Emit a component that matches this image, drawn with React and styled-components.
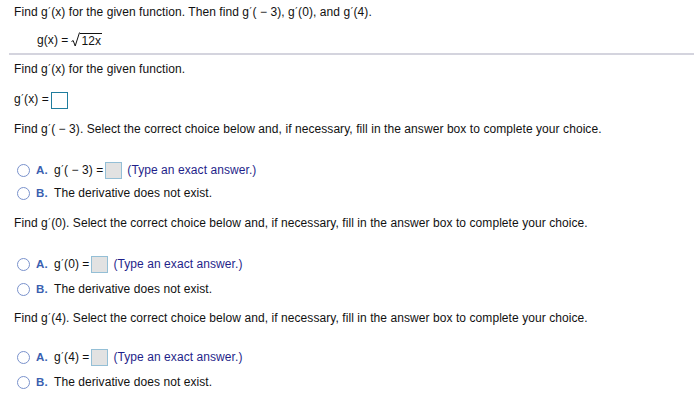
import React from "react";
import styled, { createGlobalStyle } from "styled-components";

const Global = createGlobalStyle`
  html, body { margin: 0; padding: 0; background: #fff; }
  body { font-family: "Liberation Sans", Arial, sans-serif; font-size: 12px; color: #111; letter-spacing: 0.07px; }
`;

const Page = styled.div`
  width: 694px;
  height: 406px;
  padding-top: 2px;
  box-sizing: border-box;
  overflow: hidden;
`;

const Line = styled.div`
  display: flex;
  align-items: center;
  height: 20px;
  line-height: 20px;
  padding-left: ${(p) => p.$indent ?? 14}px;
  margin-top: ${(p) => p.$mt ?? 0}px;
  white-space: nowrap;
`;

const Divider = styled.div`
  height: 2px;
  margin: 3px 0 4px 9px;
  background: #d4d4de;
`;

const Sqrt = styled.span`
  display: inline-flex;
  align-items: flex-end;
  margin-left: 3px;
`;

const Radical = styled.svg`
  width: 9px;
  height: 15px;
  display: block;
  margin-bottom: 1px;
`;

const Radicand = styled.span`
  border-top: 1px solid #111;
  line-height: 14px;
  padding: 0 1px 0 1px;
`;

const AnswerBox = styled.span`
  display: inline-block;
  width: 15px;
  height: 15px;
  margin-left: 2px;
  border: 1px solid ${(p) => (p.$active ? "#1f7d9e" : "#94bfd6")};
  background: ${(p) => (p.$active ? "#fff" : "#e2e2e2")};
  ${(p) => p.$active && "position: relative; top: 1px;"}
`;

const Radio = styled.span`
  display: inline-block;
  width: 11px;
  height: 11px;
  border-radius: 50%;
  border: 1px solid #7a92cc;
  background: #fff;
  margin-left: 3px;
  margin-right: 6px;
  box-sizing: content-box;
`;

const ChoiceLabel = styled.span`
  display: inline-block;
  width: 18px;
  color: #3a5fb0;
  font-weight: bold;
  font-size: 11.5px;
`;

const Hint = styled.span`
  margin-left: 5px;
  color: #1f1f8a;
`;

const M = styled.span`
  white-space: pre;
`;

const PrimeMark = styled.span`
  font-family: "DejaVu Sans", sans-serif;
  font-size: 10px;
  margin: 0 0.5px 0 0.5px;
  position: relative;
  top: -1px;
`;

const G = () => (
  <>
    g<PrimeMark>′</PrimeMark>
  </>
);

const RadicalIcon = () => (
  <Radical viewBox="0 0 9 15">
    <path d="M0.5 9.5 L2.2 8.6 L4.2 14 L8.5 0.5" fill="none" stroke="#111" strokeWidth="1" />
  </Radical>
);

function Choice({ mt, letter, children }) {
  return (
    <Line $mt={mt} $indent={14}>
      <Radio />
      <ChoiceLabel>{letter}.</ChoiceLabel>
      {children}
    </Line>
  );
}

function ValueQuestion({ arg, promptMt, aMt, bMt }) {
  return (
    <>
      <Line $mt={promptMt}>
        <M>
          Find <G />
          {`(${arg}). Select the correct choice below and, if necessary, fill in the answer box to complete your choice.`}
        </M>
      </Line>
      <Choice mt={aMt} letter="A">
        <M>
          <G />
          {`(${arg}) =`}
        </M>
        <AnswerBox />
        <Hint>(Type an exact answer.)</Hint>
      </Choice>
      <Choice mt={bMt} letter="B">
        <M>The derivative does not exist.</M>
      </Choice>
    </>
  );
}

export default function App() {
  return (
    <Page>
      <Global />
      <Line>
        <M>
          Find <G />(x) for the given function. Then find <G />( − 3), <G />(0), and <G />(4).
        </M>
      </Line>
      <Line $mt={8} $indent={37}>
        <M>g(x) =</M>
        <Sqrt>
          <RadicalIcon />
          <Radicand>12x</Radicand>
        </Sqrt>
      </Line>
      <Divider />
      <Line>
        <M>
          Find <G />(x) for the given function.
        </M>
      </Line>
      <Line $mt={10}>
        <M>
          <G />(x) =
        </M>
        <AnswerBox $active />
      </Line>
      <ValueQuestion arg=" − 3" promptMt={10} aMt={21} bMt={3} />
      <ValueQuestion arg="0" promptMt={10} aMt={21} bMt={5} />
      <ValueQuestion arg="4" promptMt={9} aMt={19} bMt={5} />
    </Page>
  );
}
